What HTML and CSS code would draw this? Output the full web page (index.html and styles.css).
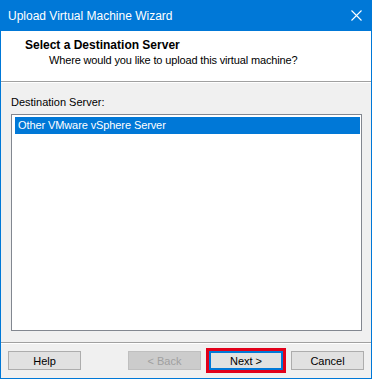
FILE: index.html
```html
<!DOCTYPE html>
<html>
<head>
<meta charset="utf-8">
<link rel="stylesheet" href="styles.css">
</head>
<body>
<div class="window">
  <div class="titlebar">
    <span class="title">Upload Virtual Machine Wizard</span>
    <span class="close">
      <svg width="11" height="11" viewBox="0 0 11 11"><path d="M0.5 0.5 L10.5 10.5 M10.5 0.5 L0.5 10.5" stroke="#fff" stroke-width="1.1" fill="none"/></svg>
    </span>
  </div>
  <div class="header">
    <div class="h-title">Select a Destination Server</div>
    <div class="h-sub">Where would you like to upload this virtual machine?</div>
  </div>
  <div class="content">
    <div class="label">Destination Server:</div>
    <div class="listbox">
      <div class="item selected">Other VMware vSphere Server</div>
    </div>
  </div>
  <div class="footer">
    <button class="btn">Help</button>
    <div class="right">
      <button class="btn disabled">&lt; Back</button>
      <button class="btn default">Next &gt;</button>
      <button class="btn">Cancel</button>
    </div>
  </div>
</div>
</body>
</html>
```
FILE: styles.css
```css
html, body {
  margin: 0;
  padding: 0;
  background: #f0f0f0;
}
.window {
  width: 372px;
  height: 379px;
  box-sizing: border-box;
  border: 1px solid #0078d7;
  border-top: 0;
  background: #f0f0f0;
  font-family: "Liberation Sans", Arial, sans-serif;
  font-size: 11px;
  color: #000;
  display: flex;
  flex-direction: column;
}
.titlebar {
  height: 31px;
  background: #0078d7;
  display: flex;
  align-items: center;
  justify-content: space-between;
  padding-left: 8px;
  margin: 0 -1px;
  padding-right: 1px;
}
.title {
  color: #fff;
  font-size: 12px;
  line-height: 14px;
  margin-top: 1px;
}
.close {
  width: 30px;
  height: 31px;
  display: flex;
  align-items: center;
  justify-content: center;
}
.header {
  height: 51px;
  background: #fff;
  border-bottom: 1px solid #a0a0a0;
  box-shadow: 0 1px 0 #ffffff;
  padding-top: 7px;
  box-sizing: border-box;
}
.h-title {
  font-weight: bold;
  font-size: 12px;
  line-height: 14px;
  padding-left: 24px;
}
.h-sub {
  font-size: 11px;
  line-height: 14px;
  margin-top: 1px;
  padding-left: 48px;
  letter-spacing: -0.15px;
}
.content {
  margin-top: 1px;
  padding: 12px 9px 11px 10px;
}
.label {
  line-height: 14px;
  height: 14px;
}
.listbox {
  margin-top: 5px;
  height: 217px;
  box-sizing: border-box;
  border: 1px solid #828790;
  background: #fff;
  padding: 2px 1px 2px 3px;
}
.item {
  height: 17px;
  line-height: 17px;
  padding-left: 3px;
  letter-spacing: -0.1px;
}
.item.selected {
  background: #0078d7;
  color: #fff;
}
.footer {
  border-top: 1px solid #a0a0a0;
  box-shadow: inset 0 1px 0 #ffffff;
  padding: 8px 7px 7px 7px;
  display: flex;
  justify-content: space-between;
  align-items: flex-start;
}
.right {
  display: flex;
  gap: 8px;
}
.btn {
  width: 73px;
  height: 19px;
  box-sizing: border-box;
  margin: 0;
  padding: 0;
  border: 1px solid #adadad;
  background: #e1e1e1;
  font-family: "Liberation Sans", Arial, sans-serif;
  font-size: 11px;
  line-height: 16px;
  color: #000;
}
.btn.disabled {
  background: #cccccc;
  border-color: #bfbfbf;
  color: #a0a0a0;
}
.btn.default {
  width: 74px;
  border: 2px solid #0078d7;
  outline: 3px solid #e2001a;
  outline-offset: 0;
}
```
